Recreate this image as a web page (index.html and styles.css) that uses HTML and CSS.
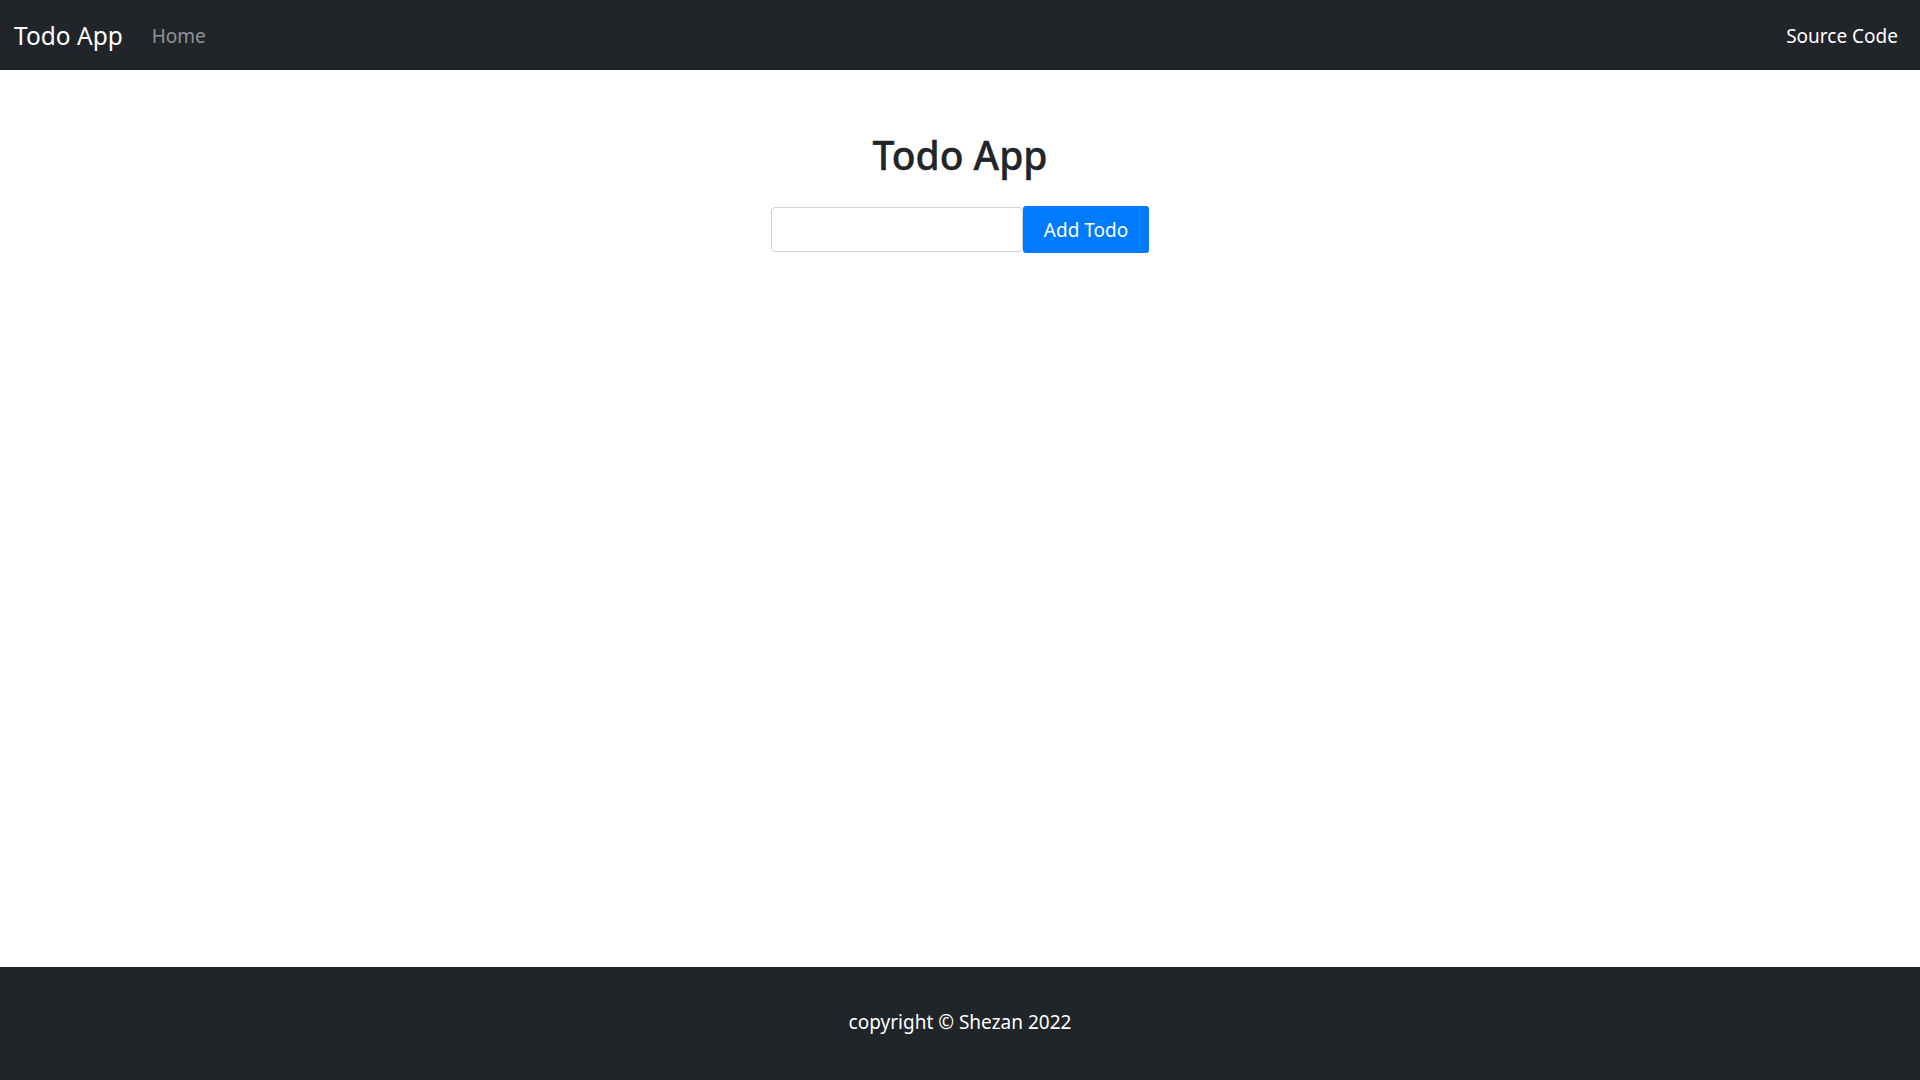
FILE: index.html
```html
<!DOCTYPE html>
<html lang="en">
<head>
<meta charset="utf-8">
<title>Todo App</title>
<link rel="stylesheet" href="styles.css">
</head>
<body>
<nav class="navbar">
  <div class="nav-left">
    <a class="brand" href="#">Todo App</a>
    <a class="nav-link" href="#">Home</a>
  </div>
  <a class="source-link" href="#">Source Code</a>
</nav>
<main class="main">
  <h2 class="title">Todo App</h2>
  <form class="todo-form">
    <input class="todo-input" type="text">
    <button class="btn-add" type="button">Add Todo</button>
  </form>
</main>
<footer class="footer">
  <p class="footer-text">copyright © Shezan 2022</p>
</footer>
</body>
</html>
```

FILE: styles.css
```css
* { box-sizing: border-box; }
html, body { height: 100%; }
body {
  margin: 0;
  font-family: "Noto Sans", "Open Sans", sans-serif;
  color: #212529;
  background: #fff;
  display: flex;
  flex-direction: column;
}
a { text-decoration: none; }

.navbar {
  height: 70px;
  background: #212529;
  display: flex;
  align-items: center;
  justify-content: space-between;
  padding: 2px 22px 0 14px;
}
.nav-left { display: flex; align-items: center; }
.brand {
  color: #fff;
  font-size: 24.5px;
  line-height: 36px;
  margin-right: 19px;
}
.nav-link {
  color: rgba(255,255,255,0.5);
  font-size: 19px;
  padding: 0 10px;
  line-height: 30px;
}
.source-link {
  color: #fff;
  font-size: 19px;
  line-height: 30px;
}

.main {
  flex: 1;
  display: flex;
  flex-direction: column;
  align-items: center;
  padding-top: 61px;
}
.title {
  margin: 0;
  font-size: 39px;
  font-weight: 500;
  line-height: 48px;
  -webkit-text-stroke: 0.4px #212529;
}
.todo-form {
  display: flex;
  align-items: center;
  margin-top: 27px;
}
.todo-input {
  width: 252px;
  height: 45px;
  border: 1px solid #ced4da;
  border-radius: 4px;
  font-size: 19px;
  padding: 0 12px;
  font-family: inherit;
}
.btn-add {
  width: 126px;
  height: 47px;
  border: none;
  border-radius: 3px;
  background: #007bff;
  color: #fff;
  font-size: 19px;
  font-family: inherit;
  padding: 0;
}

.footer {
  height: 113px;
  background: #212529;
  display: flex;
  align-items: center;
  justify-content: center;
  padding-bottom: 3px;
}
.footer-text {
  margin: 0;
  color: #fff;
  font-size: 19px;
}
```
